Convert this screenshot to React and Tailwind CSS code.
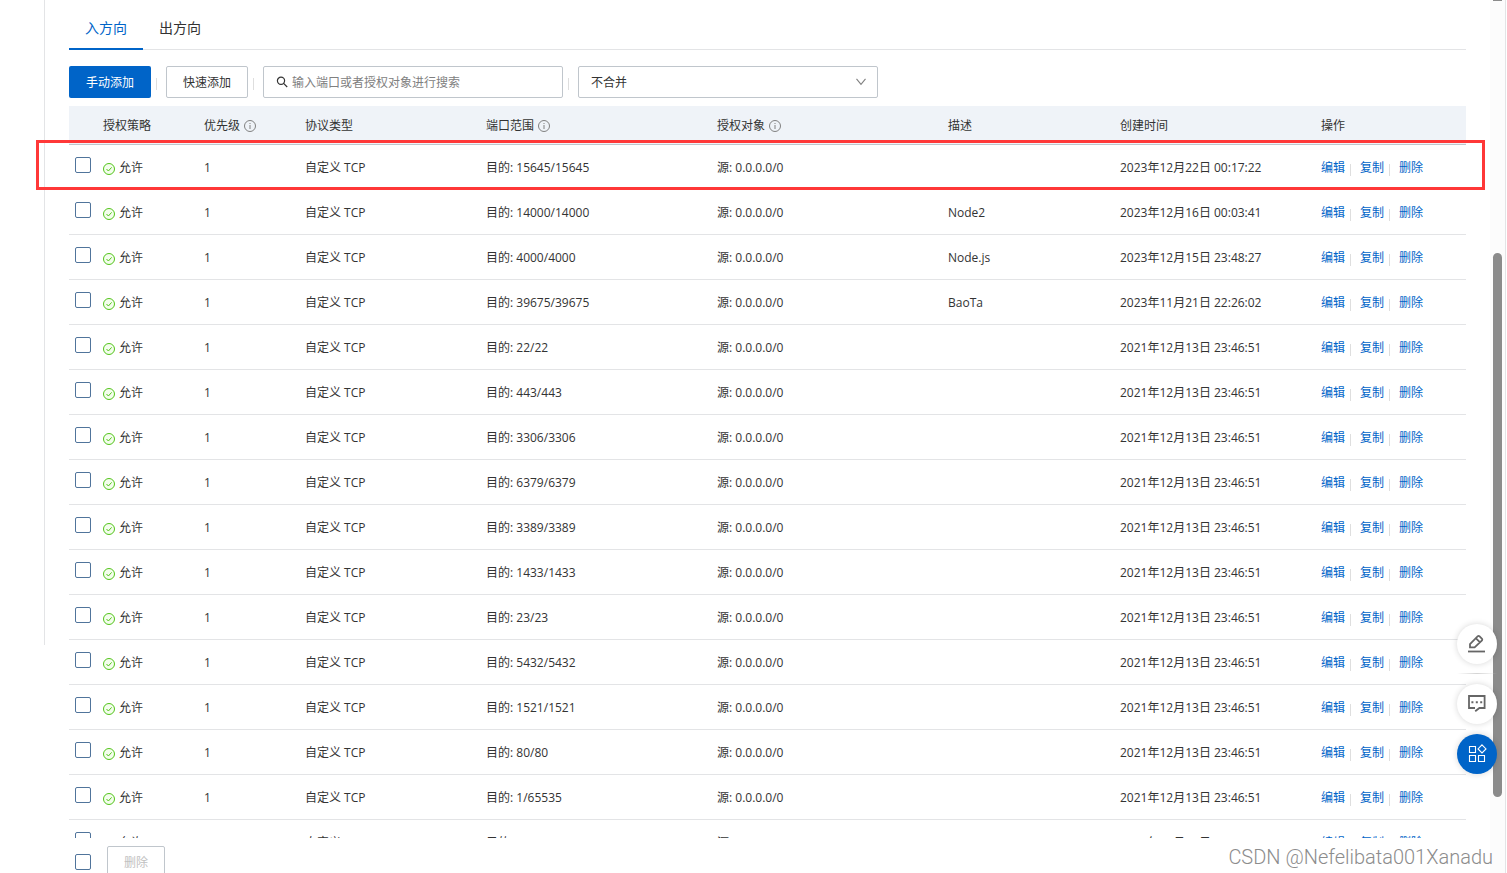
import React, { useState } from "react";

const initialRules = [
  { port: "15645/15645", desc: "", time: "2023年12月22日 00:17:22" },
  { port: "14000/14000", desc: "Node2", time: "2023年12月16日 00:03:41" },
  { port: "4000/4000", desc: "Node.js", time: "2023年12月15日 23:48:27" },
  { port: "39675/39675", desc: "BaoTa", time: "2023年11月21日 22:26:02" },
  { port: "22/22", desc: "", time: "2021年12月13日 23:46:51" },
  { port: "443/443", desc: "", time: "2021年12月13日 23:46:51" },
  { port: "3306/3306", desc: "", time: "2021年12月13日 23:46:51" },
  { port: "6379/6379", desc: "", time: "2021年12月13日 23:46:51" },
  { port: "3389/3389", desc: "", time: "2021年12月13日 23:46:51" },
  { port: "1433/1433", desc: "", time: "2021年12月13日 23:46:51" },
  { port: "23/23", desc: "", time: "2021年12月13日 23:46:51" },
  { port: "5432/5432", desc: "", time: "2021年12月13日 23:46:51" },
  { port: "1521/1521", desc: "", time: "2021年12月13日 23:46:51" },
  { port: "80/80", desc: "", time: "2021年12月13日 23:46:51" },
  { port: "1/65535", desc: "", time: "2021年12月13日 23:46:51" },
  { port: "8080/8080", desc: "", time: "2021年12月13日 23:46:51" },
];

const columns = [
  { title: "授权策略", width: "w-[101px]" },
  { title: "优先级", width: "w-[101px]", info: true },
  { title: "协议类型", width: "w-[181px]" },
  { title: "端口范围", width: "w-[231px]", info: true },
  { title: "授权对象", width: "w-[231px]", info: true },
  { title: "描述", width: "w-[172px]" },
  { title: "创建时间", width: "w-[201px]" },
  { title: "操作", width: "" },
];

function InfoIcon() {
  return (
    <svg className="size-3" viewBox="0 0 12 12" fill="none" stroke="#808080">
      <circle cx="6" cy="6" r="5.5" />
      <path d="M6 5v4M6 3v1" />
    </svg>
  );
}

function AllowIcon() {
  return (
    <svg className="mt-0.5 size-3" viewBox="0 0 12 12" fill="none" stroke="#52c41a">
      <circle cx="6" cy="6" r="5.5" fill="#f3fdec" />
      <path d="M3.5 6l1.9 2 3.2-3.6" />
    </svg>
  );
}

function Divider() {
  return <span className="mt-1 mr-[9px] ml-[5px] h-3 w-px shrink-0 bg-[#dedede]" />;
}

function Checkbox({ label, ...props }) {
  return (
    <input
      type="checkbox"
      aria-label={label}
      className="block size-4 appearance-none rounded-xs border border-[#50749b] bg-white checked:bg-[#0064c8]"
      {...props}
    />
  );
}

function Tabs({ active, onChange }) {
  return (
    <div className="flex h-[50px] shrink-0 border-b border-[#e3e4e6]">
      {["入方向", "出方向"].map((name) => (
        <button
          key={name}
          onClick={() => onChange(name)}
          className={
            name === active
              ? "-mb-px border-b-2 border-[#0064c8] px-4 pt-2 text-sm text-[#0064c8]"
              : "-mb-px border-b-2 border-transparent px-4 pt-2 text-sm"
          }
        >
          {name}
        </button>
      ))}
    </div>
  );
}

function Toolbar() {
  const [keyword, setKeyword] = useState("");

  return (
    <div className="mt-4 flex h-8 shrink-0 items-center">
      <button className="h-8 w-[82px] rounded-xs bg-[#0064c8] pt-0.5 text-white">手动添加</button>
      <Divider />
      <button className="h-8 w-[82px] rounded-xs border border-[#c0c6cc] pt-0.5">快速添加</button>
      <Divider />
      <label className="flex h-8 w-[300px] items-center gap-1 rounded-xs border border-[#c0c6cc] px-3">
        <svg className="size-3 shrink-0" viewBox="0 0 12 12" fill="none" stroke="#333" strokeWidth="1.2">
          <circle cx="5" cy="4.8" r="3.6" />
          <path d="M7.6 7.4l3.6 3.6" />
        </svg>
        <input
          className="min-w-0 flex-1 pt-0.5 outline-none placeholder:text-[#808080]"
          aria-label="搜索"
          value={keyword}
          onChange={(e) => setKeyword(e.target.value)}
          placeholder="输入端口或者授权对象进行搜索"
        />
      </label>
      <Divider />
      <div className="relative w-[300px]">
        <select
          aria-label="合并方式"
          className="h-8 w-full appearance-none rounded-xs border border-[#c0c6cc] px-3 pt-0.5"
        >
          <option>不合并</option>
          <option>合并</option>
        </select>
        <svg
          className="pointer-events-none absolute top-3 right-3 h-2 w-[10px]"
          viewBox="0 0 10 8"
          fill="none"
          stroke="#808080"
          strokeWidth="1.1"
        >
          <path d="M0.5 0.8L5 6.4L9.5 0.8" />
        </svg>
      </div>
    </div>
  );
}

function RuleRow({ rule }) {
  return (
    <tr className="h-[45px] *:border-b *:border-[#e3e4e6]">
      <td className="pt-3 pl-[6px] align-top">
        <Checkbox label={rule.port} />
      </td>
      <td className="pt-0.5 pl-2">
        <span className="flex items-center gap-1">
          <AllowIcon />
          允许
        </span>
      </td>
      <td className="pt-0.5 pl-2">1</td>
      <td className="pt-0.5 pl-2">自定义 TCP</td>
      <td className="pt-0.5 pl-2">目的: {rule.port}</td>
      <td className="pt-0.5 pl-2">源: 0.0.0.0/0</td>
      <td className="pt-0.5 pl-2">{rule.desc}</td>
      <td className="pt-0.5 pl-2">{rule.time}</td>
      <td className="pt-0.5 pl-2">
        <span className="flex items-center text-[#0064c8]">
          <a href="#edit">编辑</a>
          <Divider />
          <a href="#copy">复制</a>
          <Divider />
          <a href="#delete">删除</a>
        </span>
      </td>
    </tr>
  );
}

function RuleTable({ rules }) {
  return (
    <div className="mt-2 min-h-0 flex-1 overflow-hidden">
      <table className="w-full table-fixed border-separate border-spacing-0 text-left whitespace-nowrap">
        <thead>
          <tr className="h-[39px] bg-[#eff3f8] *:border-b *:border-[#c0c6cc]">
            <th className="w-[26px]" aria-label="选择" />
            {columns.map((col) => (
              <th key={col.title} className={`pt-0.5 pl-2 font-normal ${col.width}`}>
                <span className="flex items-center gap-1">
                  {col.title}
                  {col.info && <InfoIcon />}
                </span>
              </th>
            ))}
          </tr>
        </thead>
        <tbody>
          {rules.map((rule) => (
            <RuleRow key={rule.port} rule={rule} />
          ))}
        </tbody>
      </table>
    </div>
  );
}

function FloatingTools() {
  return (
    <div className="absolute top-[624px] right-[10px] flex flex-col items-center">
      <button
        aria-label="编辑"
        className="flex size-10 items-center justify-center rounded-full bg-white shadow-[0_0_6px_rgba(0,0,0,0.16)]"
      >
        <svg className="size-5" viewBox="0 0 20 20" fill="none" stroke="#666" strokeWidth="1.8">
          <path d="M1 17.5h17" />
          <path d="M3 13.4V10L10.8 2.2q.8-.6 1.6 0L15 4.8q.6.8 0 1.6L7.6 13.4zM9 4.4l3.8 3.8" />
        </svg>
      </button>
      <span className="mt-[9px] mb-[10px] h-px w-full bg-linear-to-r from-transparent via-[#d4d4d4] to-transparent" />
      <button
        aria-label="反馈"
        className="flex size-10 items-center justify-center rounded-full bg-white shadow-[0_0_6px_rgba(0,0,0,0.16)]"
      >
        <svg className="size-5" viewBox="0 0 20 20" fill="none" stroke="#666" strokeWidth="1.8">
          <path d="M8 14H2V2h15.6v12h-5.2l-4.2 3.2" />
          <path d="M4.4 8.2h2M8.8 8.2h2M13.2 8.2h2" strokeWidth="2" />
        </svg>
      </button>
      <button
        aria-label="应用"
        className="mt-[10px] flex size-10 items-center justify-center rounded-full bg-[#0064c8] shadow-[0_0_6px_rgba(0,0,0,0.16)]"
      >
        <svg className="size-5" viewBox="0 0 20 20" fill="none" stroke="#fff" strokeWidth="1.1">
          <path d="M2.5 2.5h6v6h-6zM2.5 11.5h6v6h-6zM11.5 11.5h6v6h-6zM15 .9l4 4l-4 4l-4-4z" />
        </svg>
      </button>
    </div>
  );
}

export default function App() {
  const [tab, setTab] = useState("入方向");

  return (
    <div className="relative flex h-screen overflow-hidden bg-white font-['Open_Sans','Noto_Sans_CJK_SC',sans-serif] text-xs text-[#333]">
      <div className="h-[645px] w-[45px] shrink-0 border-r border-[#e3e4e6]" />
      <main className="min-w-0 flex-1 px-6">
        <div className="relative flex h-full flex-col">
          <Tabs active={tab} onChange={setTab} />
          <Toolbar />
          <RuleTable rules={initialRules} />
          <div className="flex h-[35px] shrink-0 items-start gap-4 overflow-hidden pt-2 pl-[6px]">
            <span className="pt-2">
              <Checkbox label="全选" />
            </span>
            <button disabled className="h-8 w-[58px] rounded-xs border border-[#c0c6cc] pt-0.5 text-[#c1c1c1]">
              删除
            </button>
          </div>
          <div className="pointer-events-none absolute top-[140px] right-[-19px] left-[-33px] h-[50px] border-3 border-[#ff3838]" />
        </div>
      </main>
      <div className="flex w-4 shrink-0 flex-col items-center border-r border-[#e3e4e6] bg-[#fcfcfc]">
        <div className="h-px w-[9px] bg-[#8b8b8b]" />
        <div className="mt-[252px] h-[544px] w-[9px] rounded-full bg-[#8b8b8b]" />
      </div>
      <div className="w-px shrink-0" />
      <FloatingTools />
      <div className="absolute right-[14px] bottom-1 font-[Roboto,sans-serif] text-xl leading-6 font-light text-[#8c8c8c]">
        CSDN @Nefelibata001Xanadu
      </div>
    </div>
  );
}
